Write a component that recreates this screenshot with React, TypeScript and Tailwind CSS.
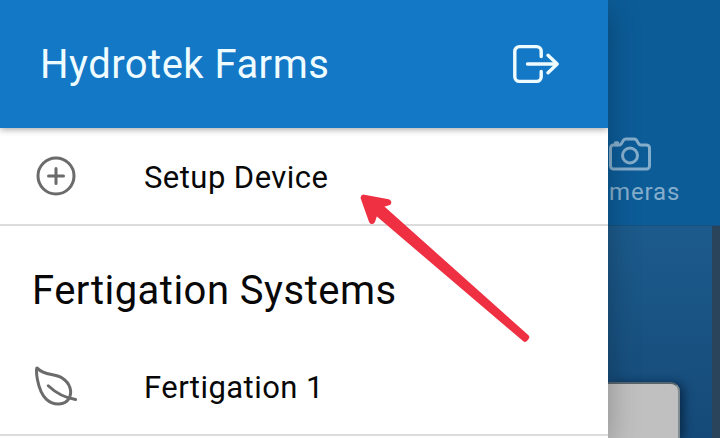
import React from "react";
import { IoAddCircleOutline, IoCameraOutline, IoLeafOutline } from "react-icons/io5";

function ExitIcon() {
  return (
    <svg width="52" height="44" viewBox="0 0 52 44" fill="none" stroke="#effcff" strokeWidth="3.4" strokeLinecap="round" strokeLinejoin="round">
      <path d="M32.2 14.5V9.2a4.6 4.6 0 0 0-4.6-4.6H10.4a4.6 4.6 0 0 0-4.6 4.6v25.6a4.6 4.6 0 0 0 4.6 4.6h17.2a4.6 4.6 0 0 0 4.6-4.6v-5.3" />
      <path d="M39 13.2l9.2 8.8-9.2 8.8M18.5 22H48" />
    </svg>
  );
}

function PointerArrow() {
  return (
    <svg className="pointer-events-none absolute left-[350px] top-[185px] z-20" width="190" height="165" viewBox="350 185 190 165" fill="#ee3042" stroke="#ee3042" strokeLinecap="round" strokeLinejoin="round">
      <path d="M388 202.3L363.8 197.8L372 220.8L376 209L381 204.5Z" strokeWidth="6.4" />
      <path d="M370 202L381 207.5L526.2 337.2L525 338.8L376.5 212.3Z" strokeWidth="6" />
    </svg>
  );
}

function DrawerItem({ icon, label, className }: { icon: React.ReactNode; label: string; className: string }) {
  return (
    <div className={`flex shrink-0 items-center border-b-2 border-[#dcdcdc] pl-8 ${className}`}>
      <span className="w-28 text-[#6b6b6b]">{icon}</span>
      <span className="pt-[3px] text-[31px] leading-9 tracking-[0.45px] text-[#080808]">{label}</span>
    </div>
  );
}

export default function App() {
  return (
    <div className="relative flex h-[438px] w-[720px] overflow-hidden bg-white font-['Roboto',sans-serif]">
      <aside className="z-10 flex w-[608px] shrink-0 flex-col overflow-hidden bg-white shadow-[0_8px_30px_rgba(0,0,0,0.28)]">
        <header className="z-10 flex h-32 shrink-0 items-center justify-between bg-[#1378c6] pl-10 pr-[47px] shadow-[0_1px_7px_rgba(0,0,0,0.4)]">
          <h1 className="pt-0.5 text-[40px] leading-none tracking-[0.47px] text-[#effcff]">Hydrotek Farms</h1>
          <ExitIcon />
        </header>
        <DrawerItem icon={<IoAddCircleOutline size={48} />} label="Setup Device" className="h-[98px]" />
        <h2 className="mt-[41px] h-12 shrink-0 pl-8 text-[40px] leading-[48px] tracking-[0.48px] text-[#080808]">Fertigation Systems</h2>
        <DrawerItem icon={<IoLeafOutline size={48} />} label="Fertigation 1" className="mt-[23px] h-[98px]" />
      </aside>
      <main className="flex w-28 flex-col overflow-hidden bg-[#0c5c98]">
        <div className="flex h-[225px] shrink-0 flex-col items-start pt-[130px] text-[#85aecc]">
          <IoCameraOutline size={48} className="-ml-0.5" />
          <span className="pl-px text-[24px] leading-7 tracking-[0.85px]">meras</span>
        </div>
        <div className="flex min-h-0 flex-1 border-t border-[#17517f] bg-linear-to-b from-[#1c5b8c] to-[#154a78]">
          <div className="flex flex-1 flex-col justify-end overflow-hidden">
            <div className="h-14 w-[72px] rounded-tr-[9px] border-r-2 border-t-2 border-r-[#818b92] border-t-[#56646f] bg-[#c0c0c0] shadow-[4px_1px_10px_rgba(0,20,45,0.6)]" />
          </div>
          <div className="w-2 bg-[#2a455b]" />
        </div>
      </main>
      <PointerArrow />
    </div>
  );
}
